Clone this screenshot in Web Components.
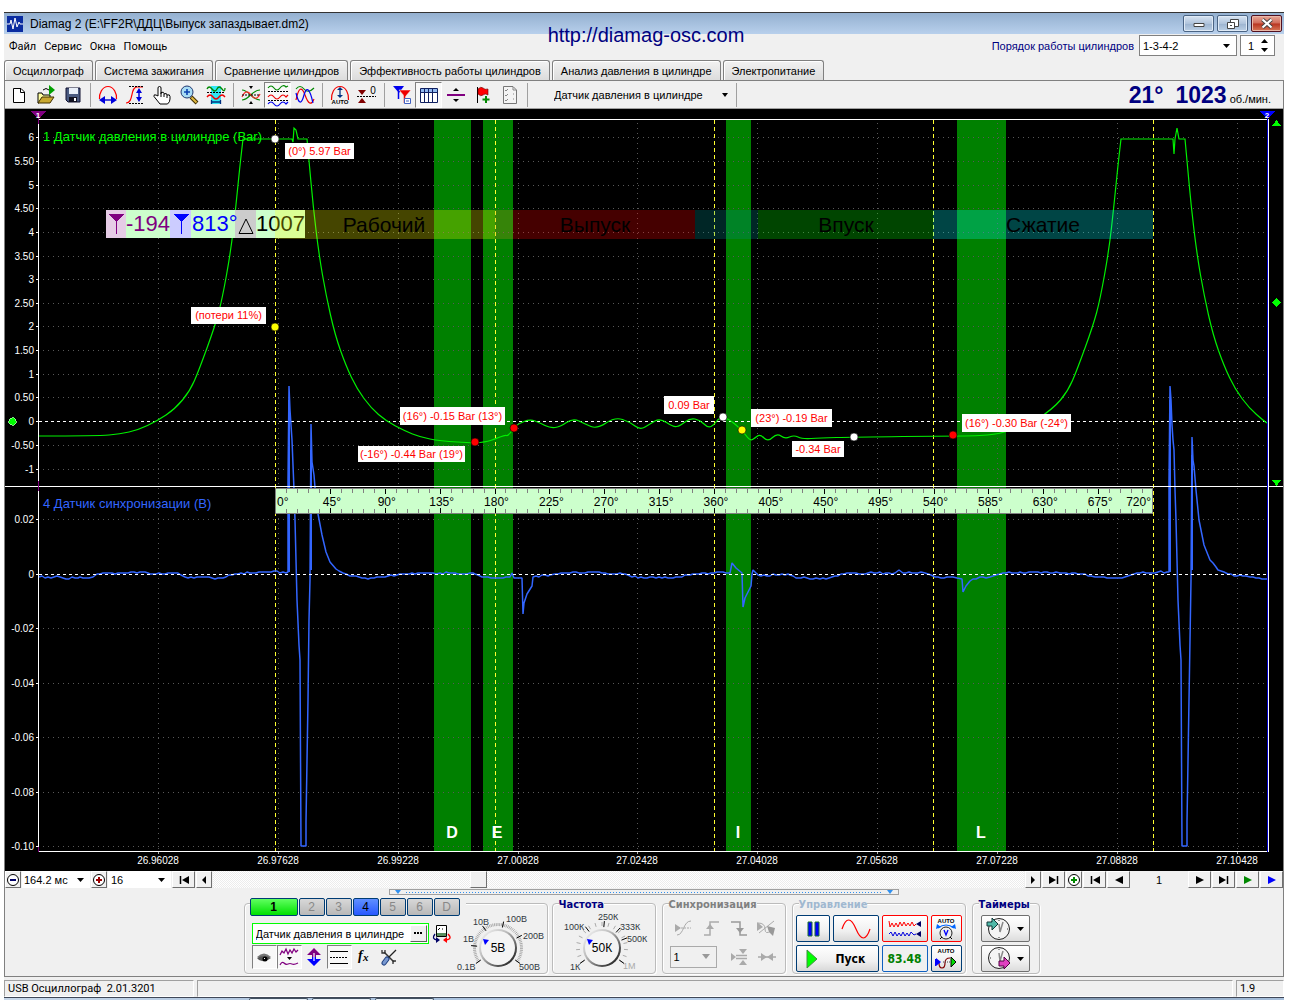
<!DOCTYPE html>
<html lang="ru">
<head>
<meta charset="utf-8">
<title>Diamag 2</title>
<style>
html{background:#fff}
body{margin:0;padding:12px 12px 0 4px;font-family:"Liberation Sans",sans-serif;font-size:11px;line-height:14px;color:#000}
</style>
</head>
<body>
<osc-window></osc-window>
<script>
const BASE=`<style>
*{box-sizing:border-box}
button,input,select{font:inherit;color:inherit;margin:0;padding:0;border:0;border-radius:0;background:none;appearance:none;-webkit-appearance:none;outline:0}
button{display:flex;align-items:center;justify-content:center}
svg{display:block;flex:none}
a{color:inherit;text-decoration:none}
</style>`;
const define=(name,html,after)=>customElements.define(name,class extends HTMLElement{
  constructor(){super();this.attachShadow({mode:'open'})}
  connectedCallback(){
    this.shadowRoot.innerHTML=BASE+(typeof html==='function'?html(this):html);
    if(after)after(this);
  }
});
const S=(w,h,body)=>`<svg width="${w}" height="${h}" viewBox="0 0 ${w} ${h}" fill="none" aria-hidden="true">${body}</svg>`;
const p=(d,c,extra='')=>`<path d="${d}" stroke="${c}" ${extra}/>`;
const f=(d,c,extra='')=>`<path d="${d}" fill="${c}" ${extra}/>`;
const t=(x,y,s,c,size,extra='')=>`<text x="${x}" y="${y}" fill="${c}" font-size="${size}" ${extra}>${s}</text>`;

const ICONS={
 'new':S(20,20,f('M4.500 3.500H12L15.500 7V17.500H4.500Z','#fff','stroke="#000"')+p('M11.500 3.500V7.500H15.500','#000')),
 open:S(20,20,f('M2 8H6L7 10H14V13H6L3 18H2Z','#ffffa0','stroke="#000"')+f('M2 18L6 12H18L14 18Z','#c8a830','stroke="#403000"')+f('M13 0L19 5L13 10Z','#00a000')+p('M7 5Q10 2 13 5','#000')),
 save:S(20,20,f('M3 3H17V17H5L3 15Z','#4a5a80','stroke="#101030"')+f('M6 3H15V9H6Z','#e8eef8')+f('M6 12H14V17H6Z','#101020')+f('M11 13H13V16H11Z','#fff')),
 period:S(20,20,p('M1.500 14C1 9 4 1.500 10 1.500S19 9 18.500 14','#f00','stroke-width="1.200"')+p('M4 15H16','#00c','stroke-width="1.400"')+f('M1 15L7 11V19Z','#00d')+f('M19 15L13 11V19Z','#00d')),
 amp:S(20,20,p('M1 18C9 18 5 2 12 2H18','#f00','stroke-width="1.2"')+p('M4 1.5H18M4 18.5H18','#000','stroke-dasharray="2 1"')+p('M14 5V15','#00d','stroke-width="1.5"')+f('M14 3L17 8H11Z','#00d')+f('M14 17L17 12H11Z','#00d')),
 hand:S(20,20,f('M6 11V3Q6 1.500 7.500 1.500Q9 1.500 9 3V9V7.500Q12 6.500 12 8.500V9Q15 7.500 15 10Q18 9 18 11.500V14Q18 17 15.500 19H8L2 11.500Q1.500 9 4 10Z','#fff','stroke="#000"')+p('M9 9V12M12 9V12M15 10V13','#000')),
 zoom:S(20,20,`<circle cx="8" cy="7" r="6" fill="#a8dcf4" stroke="#203870"/>`+p('M8 4V10M5 7H11','#0a40b0','stroke-width="1.6"')+p('M12 12L18 18','#403000','stroke-width="4"')+p('M12.500 12.500L17.500 17.500','#e0b840','stroke-width="2"')),
 range:S(20,20,f('M5 1H15V19H5Z','#30e8f4')+p('M1 4Q3 0 6 4T11 4T16 4T19 3','#080','stroke-width="1.3"')+p('M1 7.500H19','#000','stroke-dasharray="2 1"')+p('M1 12Q4 8 7 12T13 12T19 12','#e00','stroke-width="1.3"')+p('M5 17H15M5.500 15V19M14.500 15V19','#003080','stroke-width="1.3"')),
 cross:S(20,20,p('M1 15C8 15 11 5 19 5','#080','stroke-width="1.2"')+p('M1 5C8 5 11 15 19 15','#080','stroke-width="1.2"')+p('M1 12Q5 3 10 10T19 9','#f22','stroke-width="1.2"')+p('M1 10H19','#000','stroke-dasharray="2 1"')+f('M8 1H12L10 4Z','#000')+f('M8 19H12L10 16Z','#000')),
 waves:S(24,24,p('M2 5Q5 1 8 5T14 5T20 4L22 3','#080','stroke-width="1.2"')+p('M2 14Q5 10 8 14T14 14T20 14L22 12','#e00','stroke-width="1.2"')+p('M2 21Q5 17 8 21T14 21T20 21L22 19','#00e','stroke-width="1.2"')+p('M2 8.500H22M2 17.500H22','#000','stroke-dasharray="2 1"')),
 multi:S(20,20,p('M1 4Q5 -1 9 4T19 3','#080','stroke-width="1.2"')+p('M1 15Q5 -4 10 10T19 14','#e00','stroke-width="1.2"')+p('M1 8Q5 25 9 10Q13 -4 18 18','#00e','stroke-width="1.2"')),
 auto:S(20,20,p('M1.500 15C1 9 4 1.500 10 1.500S19 9 18.500 15','#e00','stroke-width="1.200"')+p('M10 4V11','#003080','stroke-width="1.300"')+f('M10 2L13 5H7Z','#003080')+f('M10 13L13 10H7Z','#003080')+`<text x="10" y="19" font-size="6" font-weight="700" text-anchor="middle" fill="#000">AUTO</text>`),
 zero:S(20,20,f('M1 5H9L5 10Z','#800000')+f('M1 18H9L5 13Z','#800000')+p('M0 11.500H19','#000','stroke-dasharray="2 1"')+`<text x="16" y="9" font-size="10" text-anchor="middle" fill="#000">0</text>`),
 trig:S(20,20,f('M1 1H12L7 8Z','#00e')+p('M6.500 5V14','#00e','stroke-width="1.500"')+f('M7 5H19L13 12Z','#e00','stroke="#fff" stroke-width=".5"')+p('M12.500 10V18','#e00','stroke-width="1.500"')+f('M12.500 13.500H18.500V18.500H12.500Z','#fff','stroke="#4060c0"')+p('M14 16H17','#4060c0')),
 table:S(20,20,f('M1.500 3.500H18.500V17.500H1.500Z','#fff','stroke="#102060"')+f('M2 4H18V7H2Z','#90b8f0')+p('M1.500 7.500H18.500M5.500 4V17M9.500 4V17M13.500 4V17','#102060')),
 split:S(20,20,p('M1 10H19','#800080','stroke-width="2"')+f('M7 6H13L10 3Z','#000')+f('M7 14H13L10 17Z','#000')),
 flag:S(20,20,p('M4.500 2V18','#000')+f('M5 4Q8 1 10 3T15 4V10Q12 8 10 10T5 9Z','#f00','stroke="#600" stroke-width=".6"')+p('M13 11V18M9.500 14.500H16.500','#080','stroke-width="2"')),
 list:S(20,20,f('M3.500 1.500H13L16.500 5V18.500H3.500Z','#f4f4f4','stroke="#777"')+p('M13 2V5H16M5 5L6 6L8 4M5 10L6 11L8 9M5 15L6 16L8 14M13 9H14M13 14H14','#888')),
 logo:S(16,16,f('M0 0H16V16H0Z','#0a2ca0')+p('M0 8H3L4 4L6 13L8 2L10 11L12 6L13 8H16','#fff')),
 eye:S(22,20,f('M4 10Q11 3 18 10Q11 13 4 10Z','#777')+f('M4 11Q11 7 18 11Q12 16 6 13Z','#555')+`<circle cx="12" cy="12" r="2.500" fill="#000"/>`+f('M11 11H12V12H11Z','#fff')),
 noise:S(20,20,p('M1 8L3 4L5 6L7 2L9 7L11 3L13 6L15 2L17 5L19 3','#800080','stroke-width="1.300"')+p('M1 18Q3 14 5 16T9 17T13 17T19 16','#800080','stroke-width="1.200"')+f('M8 10H13L10.500 13Z','#000')),
 move:S(20,20,f('M10 1L17 8H12V10H8V8H3Z','#800080')+f('M10 19L17 12H12V10H8V12H3Z','#00f')+p('M10 6V14','#fff','stroke-width="1.200"')),
 lines:S(20,20,p('M1 4.500H19M1 16.500H19','#000')+p('M1 10.500H19','#000','stroke-dasharray="2 1"')),
 fx:S(20,20,`<text x="4" y="13" font-family="Liberation Serif,serif" font-size="14" font-style="italic" font-weight="700" fill="#000">f</text><text x="9" y="14" font-family="Liberation Serif,serif" font-size="11" font-style="italic" font-weight="700" fill="#000">x</text>`),
 tools:S(20,20,p('M5 5L15 15','#333','stroke-width="1.500"')+p('M3 3V6H6V3M14 17V14H17','#333','stroke-width="1.300"')+p('M17 3L9 11','#222','stroke-width="1.300"')+p('M8 12L5 16','#204080','stroke-width="5" stroke-linecap="round"')+p('M8 12L5 16','#7898d0','stroke-width="3" stroke-linecap="round"')),
 device:S(20,20,f('M4.500 1.500H14.500V12.500H4.500Z','#fff','stroke="#000"')+f('M5 9H14V12H5Z','#5a9060')+p('M6 6L8 4M10 5H11','#000')+p('M3 10Q-1 15 5 16','#006','stroke-width="1.300"')+p('M16 10Q21 15 14 16','#f00','stroke-width="1.300"')+f('M4 13V19L8 16Z','#006')+f('M15 13V19L11 16Z','#f00')),
 s1:S(18,18,p('M1 9H17','#aaa','stroke-dasharray="2 1"')+p('M3 16C10 16 9 2 17 2','#aaa')+f('M1 5L7 9L1 13Z','#aaa')),
 s2:S(18,18,p('M2 16H8V3H17','#aaa','stroke-width="1.500"')+f('M4 10H12L8 5Z','#aaa')),
 s3:S(18,18,p('M1 3H10V16H17','#999','stroke-width="1.500"')+f('M6 9H14L10 14Z','#999')),
 s4:S(20,18,p('M1 4Q8 4 8 10T14 12M2 14L17 2','#aaa')+f('M0 3L6 8L0 12Z','#aaa')+f('M10 7L18 9L16 17L12 13Z','#999')),
 s5:S(18,18,p('M6 7.500H17M6 10.500H17','#aaa','stroke-width="1.500"')+f('M1 5L6 9L1 13Z','#aaa')+f('M9 1H17L13 6Z','#aaa')+f('M9 17H17L13 12Z','#aaa')),
 s6:S(18,18,p('M0 9H18','#aaa','stroke-width="1.500"')+f('M3 5L9 9L3 13ZM15 5L9 9L15 13Z','#aaa')),
 pause:S(16,16,f('M3 1H7V15H3Z','#00f','stroke="#1a7030"')+f('M10 1H14V15H10Z','#00f','stroke="#1a7030"')),
 sine:S(32,22,p('M2 11C6 -1 11 -1 16 11S26 23 30 11','#f00','stroke-width="1.200"')),
 two:S(34,20,p('M1 2L2 8L4 4L6 8L8 4L10 8L12 3L14 7L16 3L18 7L20 4L22 7L24 3L26 7L28 5','#f00')+p('M1 15L3 13L5 17L7 13L9 17L11 14L13 17L15 13L17 17L19 14L21 17L23 13L26 16L28 15','#00d')+f('M33 2V8L28 5Z','#006')+f('M33 12V18L28 15Z','#006')),
 autov:S(26,26,`<text x="13" y="7" font-size="6" font-weight="700" text-anchor="middle" fill="#000">AUTO</text>`+p('M5 12Q13 6 21 12','#06f','stroke-width="1.200"')+f('M3 13L4 8L8 11ZM23 13L22 8L18 11Z','#06f')+`<circle cx="13" cy="17" r="6" fill="#eee" stroke="#222"/>`+p('M11 14L13 19L15 14','#00f','stroke-width="1.300"')+p('M7 23L9 21M19 23L17 21','#000')),
 autop:S(26,26,`<text x="13" y="7" font-size="6" font-weight="700" text-anchor="middle" fill="#000">AUTO</text>`+p('M6 17Q6 22 9 22T12 17T17 12','#800000','stroke-width="1.200"')+p('M2.500 13V20','#00f')+f('M3 12L8 16L3 20Z','#00f')+p('M10 16H18','#444','stroke-dasharray="1 1"')+f('M18 11L23 16L18 21Z','#0d0','stroke="#000"')),
 clock1:S(26,26,`<circle cx="13" cy="13" r="10.500" fill="#f4f4f4" stroke="#222"/>`+p('M13 8L14 16L17 6','#888','stroke-width="1.500"')+p('M13 4V5M13 21V22M21 13H22','#333')+f('M1 6H6V2L12 8L6 14V10H1Z','#50b8a8','stroke="#103838"')),
 clock2:S(26,26,`<circle cx="13" cy="12" r="10.500" fill="#f4f4f4" stroke="#222"/>`+p('M13 7L14 15L17 5','#888','stroke-width="1.500"')+p('M13 3V4M4 12H5','#333')+f('M13 15H18V11L24 17L18 23V20H13Z','#e040c0','stroke="#500040"')),
 down:S(7,4,f('M0 0H7L3.500 4Z','#000')),
 downs:S(6,4,f('M0 0H6L3 4Z','#000')),
 downg:S(8,5,f('M0 0H8L4 5Z','#999')),
 start:S(12,20,f('M1 1L11 10L1 19Z','#0f0','stroke="#409040"')),
 first:S(12,10,p('M2.500 1V9','#000','stroke-width="1.500"')+f('M11 1V9L4 5Z','#000')),
 prev:S(8,10,f('M6 1V9L2 5Z','#000')),
 prevl:S(10,10,f('M9 1V9L1 5Z','#000')),
 next:S(8,10,f('M2 1V9L6 5Z','#000')),
 nextl:S(10,10,f('M1 1V9L9 5Z','#000')),
 last:S(12,10,p('M9.500 1V9','#000','stroke-width="1.500"')+f('M1 1V9L8 5Z','#000')),
 green:S(10,10,f('M1 1V9L9 5Z','#080')),
 blue:S(10,10,f('M1 1V9L9 5Z','#00f')),
 minus:S(14,14,`<circle cx="7" cy="7" r="5.500" fill="#fff" stroke="#000"/>`+p('M4 7H10','#006','stroke-width="2"')),
 plusr:S(14,14,`<circle cx="7" cy="7" r="5.500" fill="#fff" stroke="#000"/>`+p('M4 7H10M7 4V10','#900','stroke-width="2"')),
 plusg:S(14,14,`<circle cx="7" cy="7" r="5.500" fill="#fff" stroke="#000"/>`+p('M4 7H10M7 4V10','#080','stroke-width="2"')),
};

/* inline icon */
define('osc-icon',el=>`<style>:host{display:block;flex:none}</style>${ICONS[el.getAttribute('name')]}`);

/* flat icon button, optionally pressed */
define('osc-tool',el=>`<style>
:host{display:flex;flex:none;width:27px;height:26px}
:host([small]){width:25px;height:24px}
button{width:100%;height:100%}
:host([pressed]) button{border:1px solid #808080;border-right-color:#fff;border-bottom-color:#fff;background:#f8f8f8}
</style><button aria-label="${el.getAttribute('name')}" ${el.hasAttribute('pressed')?'aria-pressed="true"':''}>${ICONS[el.getAttribute('name')]}</button>`);

/* select with custom arrow */
define('osc-select',el=>`<style>
:host{display:grid;align-items:center;background:#fff}
:host([flat]){background:none}
:host([boxed]){border:1px solid #808080}
:host([disabled]){background:none;border-color:#aaa}
select,i{grid-area:1/1}
select{width:100%;height:100%;padding-left:var(--pad,3px)}
select:disabled{opacity:1}
i{justify-self:end;margin-right:var(--arrow,6px);pointer-events:none}
</style><select aria-label="${el.getAttribute('label')}" ${el.hasAttribute('disabled')?'disabled':''}><option>${el.getAttribute('value')}</option></select><i>${ICONS[el.hasAttribute('disabled')?'downg':el.hasAttribute('flat')?'downs':'down']}</i>`);

define('osc-titlebar',`<style>
:host{display:flex;align-items:center;height:22px;border-top:1px solid #333;background:linear-gradient(#94b0d0,#b8d0ec);padding:0 2px 0 3px;font-family:"Liberation Sans",sans-serif;font-size:12px}
span{flex:1;margin-left:7px}
div{display:flex;gap:3px}
button{width:31px;height:17px;border:1px solid #4a6484;border-radius:2px;background:linear-gradient(#d8e4f2,#b0c4dc 50%,#9cb4d0 52%,#bcd0e6);box-shadow:inset 0 0 0 1px #dfeaf6}
button:last-child{background:linear-gradient(#e8a898,#d06a58 48%,#b83420 52%,#d87858);border-color:#501020;box-shadow:inset 0 0 0 1px #eab8a8}
</style>${ICONS.logo}<span>Diamag 2 (E:\\FF2R\\ДДЦ\\Выпуск запаздывает.dm2)</span>
<div><button aria-label="Свернуть">${S(12,9,f('M1 4.500H11V7.500H1Z','#fff','stroke="#444"'))}</button>
<button aria-label="Восстановить">${S(14,12,f('M4.500 1.500H12.500V8.500H4.500Z','#fff','stroke="#444"')+f('M1.500 4.500H8.500V10.500H1.500Z','#fff','stroke="#444"')+p('M4 7.500H6','#444'))}</button>
<button aria-label="Закрыть">${S(14,11,p('M2.500 1.500L11.500 9.500M11.500 1.500L2.500 9.500','#444','stroke-width="4"')+p('M2.500 1.500L11.500 9.500M11.500 1.500L2.500 9.500','#fff','stroke-width="2.200"'))}</button></div>`);

define('osc-menubar',`<style>
:host{display:flex;height:25px;padding:1px 9px 0 5px;position:relative}
nav{display:flex;gap:8px;flex:1;font-family:Roboto,sans-serif;font-size:11px}
.url{position:absolute;left:50%;top:-11px;transform:translateX(-50%);font-size:20px;line-height:24px;color:#000080;margin-left:2px}
label{display:flex;align-items:center;gap:5px;color:#000080;height:21px}
osc-select{width:98px;height:21px;color:#000}
.spin{display:flex;width:35px;height:21px;margin-left:3px;border:1px solid #808080;background:#fff}
.spin input{width:20px;text-align:center}
.spin div{display:flex;flex-direction:column;justify-content:center;gap:5px}
</style><nav><button>Файл</button><button>Сервис</button><button>Окна</button><button>Помощь</button></nav>
<a class="url" href="http://diamag-osc.com">http://diamag-osc.com</a>
<label>Порядок работы цилиндров <osc-select boxed label="Порядок работы цилиндров" value="1-3-4-2"></osc-select></label>
<div class="spin"><input type="text" aria-label="Цилиндр" value="1"><div><button aria-label="Больше">${S(7,4,f('M0 4H7L3.500 0Z','#000'))}</button><button aria-label="Меньше">${ICONS.down}</button></div></div>`);

define('osc-tabs',`<style>
:host{display:flex;align-items:flex-end;gap:2px;height:21px}
button{height:20px;padding:0 8px;border:1px solid #808080;border-bottom:0;border-radius:3px 3px 0 0;background:linear-gradient(#f2f2f2,#dcdcdc);box-shadow:inset 1px 1px #fff}
button:first-child{height:22px;margin-bottom:-1px;margin-right:-1px;padding:0 8px 2px 12px;background:#f0f0f0}
</style><button>Осциллограф</button><button>Система зажигания</button><button>Сравнение цилиндров</button><button>Эффективность работы цилиндров</button><button>Анализ давления в цилиндре</button><button>Электропитание</button>`);

define('osc-toolbar',`<style>
:host{display:flex;align-items:center;height:29px;border-top:1px solid #808080;border-bottom:1px solid #a0a0a0}
i{width:8px;height:24px;background:linear-gradient(#a0a0a0,#a0a0a0) 4px 0/1px 100% no-repeat;flex:none}
osc-select{width:201px;height:24px;--pad:23px;--arrow:4px}
.read{margin-left:auto;display:flex;align-items:baseline;color:#000080;font:bold 23px/26px "Liberation Sans",sans-serif;padding-right:12px}
.read b+b{margin-left:12px}
.read span{font:11px/14px "Liberation Sans",sans-serif;color:#000;margin-left:3px}
</style>
<osc-tool name="new"></osc-tool><osc-tool name="open"></osc-tool><osc-tool name="save"></osc-tool><i></i>
<osc-tool name="period"></osc-tool><osc-tool name="amp"></osc-tool><osc-tool name="hand"></osc-tool><osc-tool name="zoom"></osc-tool><osc-tool name="range"></osc-tool><i></i>
<osc-tool name="cross"></osc-tool><osc-tool name="waves" pressed></osc-tool><osc-tool name="multi"></osc-tool><i></i>
<osc-tool name="auto"></osc-tool><osc-tool name="zero"></osc-tool><i></i>
<osc-tool name="trig"></osc-tool><osc-tool name="table" pressed></osc-tool><osc-tool name="split"></osc-tool><osc-tool name="flag"></osc-tool><osc-tool name="list"></osc-tool><i></i>
<osc-select flat label="Датчик" value="Датчик давления в цилиндре"></osc-select><i></i>
<div class="read"><b>21°</b><b>1023</b><span>об./мин.</span></div>`);

/* oscilloscope screen */
const smooth=pts=>{let d=`M${pts[0]}`;for(let i=1;i<pts.length-1;i++){const a=pts[i],b=pts[i+1];d+=`Q${a} ${(a[0]+b[0])/2},${(a[1]+b[1])/2}`}return d+`L${pts[pts.length-1]}`};
const chop=s=>s.trim().split(/\s+/).map(q=>q.split(',').map(Number));
const noisy=pts=>{ /* adds sampling ripple on near-level stretches */
  let d='M'+pts[0],seed=7;
  for(let i=1;i<pts.length;i++){
    const [x0,y0]=pts[i-1],[x1,y1]=pts[i];
    if(x1-x0>6)for(let x=x0+3;x<x1-1;x+=3){seed=(seed*73+41)%257;const y=y0+(y1-y0)*(x-x0)/(x1-x0);d+=`L${x},${Math.round(y+(seed/257-.5)*1.6)}`}
    d+=`L${x1},${y1}`;
  }
  return d;
};
define('osc-scope',()=>{
  const grid=[158,278,398,518,637,757,877,997,1117,1237], time=['26.96028','26.97628','26.99228','27.00828','27.02428','27.04028','27.05628','27.07228','27.08828','27.10428'];
  const top=[['6',137],['5.50',161],['5',185],['4.50',208],['4',232],['3.50',256],['3',279],['2.50',303],['2',326],['1.50',350],['1',374],['0.50',397],['0',421],['-0.50',445],['-1',469]];
  const bot=[['0.02',519],['0',574],['-0.02',628],['-0.04',683],['-0.06',737],['-0.08',792],['-0.10',846]];
  let g='';
  const bands=[[434,37],[483,30],[726,25],[957,49]];
  g+=bands.map(b=>`<rect x="${b[0]}" y="120" width="${b[1]}" height="731" fill="#008000"/>`).join('');
  g+=`<g stroke="#585858" stroke-dasharray="1 4">`+grid.map(x=>`<path d="M${x}.5 123V851"/>`).join('')+[...top,...bot].filter(a=>a[0]!=='0').map(a=>`<path d="M43 ${a[1]}.5H1267"/>`).join('')+`</g>`;
  g+=`<g stroke="#fff" stroke-dasharray="3 3"><path d="M39 421.5H1267"/></g>`;
  g+=`<g class="ax" text-anchor="end">`+[...top,...bot].map(a=>`<text x="34" y="${a[1]+4}">${a[0]}</text><path d="M36 ${a[1]}.5H39" stroke="#fff"/>`).join('')+`</g>`;
  g+=`<g class="ax" text-anchor="middle">`+grid.map((x,i)=>`<text x="${x}" y="864">${time[i]}</text><path d="M${x}.5 852V854" stroke="#aaa"/>`).join('')+`</g>`;
  g+=`<g fill="none" stroke="#ffff30" stroke-dasharray="4 3">`+[275,495,714,933,1153].map(x=>`<path d="M${x}.5 120V851"/>`).join('')+`</g>`;
  /* pressure trace */
  const rise=chop('98,436 120,434 138,430 157,421 175,409 190,391 199,370 215,326 222,300 231,250 236,205 240,165 243,139');
  const fall=chop('307,139 309,160 313,205 319,255 326,295 335,335 346,366 357,389 371,408 386,421 405,431 420,437 440,441 475,443');
  const sh=a=>a.map(q=>[q[0]+878,q[1]]);
  const green=smooth([[39,436],...rise])+'H292L293 142L294 128L296 130L298 139H307'+smooth(fall).replace('M','L')+
   smooth(chop('475,443 486,442 495,439 505,435 508,436 514,428 518,424 530,419 540,423 550,428 560,427 573,418 585,424 597,429 615,417 630,422 640,430 650,424 660,418 673,427 680,426 690,418 700,420 708,428 714,425 718,419 723,417 730,420 742,430 750,441 755,438 760,434 768,442 777,433 785,439 794,435 802,439 820,438 853,437 953,436 975,436 1000,434 1022,426 1035,421')).replace('M','L')+
   smooth(sh(rise.slice(3))).replace('M','L')+'H1173L1174 154L1175 139L1177 128L1179 139H1185'+smooth([...sh(fall.slice(0,10)),[1267,423]]).replace('M','L');
  g+=`<path d="${green}" fill="none" stroke="#00f000" shape-rendering="auto" stroke-width="1.2"/>`;
  /* sync trace */
  const blue=noisy(chop('39,577 60,577 66,579 80,577 93,577 97,574 125,573 142,572 150,574 175,573 185,577 220,578 235,574 265,572 288,572 288,480 289,386 290,410 291,425 292,440 294,490 295,520 297,600 299,645 300,660 301,846 306,846 306,822 308,700 309,620 310,580 311,424 312,462 314,475 316,500 318,514 322,535 326,552 330,562 336,569 343,573 350,576 365,578 385,577 400,574 440,573 475,574 482,577 500,578 510,577 512,573 514,578 522,578 523,614 524,603 527,594 532,586 533,577 550,575 555,574 590,572 625,574 632,577 670,578 690,575 705,573 730,573 732,563 736,568 742,573 743,607 745,598 751,586 752,574 753,570 758,575 790,575 798,578 820,579 835,576 850,573 895,573 899,570 903,573 925,573 935,577 957,578 962,579 963,592 966,586 970,581 980,577 990,577 1000,574 1020,572 1060,573 1085,574 1095,577 1110,578 1125,577 1140,573 1169,572 1169,480 1170,386 1171,400 1172,425 1173,440 1174,450 1175,490 1176,520 1178,600 1180,645 1181,660 1182,846 1187,846 1187,822 1189,700 1191,580 1192,437 1193,460 1194,466 1196,490 1199,520 1204,545 1210,560 1218,570 1228,574 1250,577 1267,579'));
  g+=`<path d="${blue}" fill="none" stroke="#3366ff" stroke-width="1.5" shape-rendering="auto" stroke-linejoin="bevel"/>`;
  g+=`<path d="M289 400V572M311 450V570M1170 400V572M1192 455V570" stroke="#3366ff" stroke-width="2"/>`;
  g+=`<path d="M39 574.5H1267" stroke="#fff" stroke-dasharray="3 3"/>`;
  g+=`<path d="M38 119.5H1268M38.500 119V852M38 851.500H1268M5 486.500H1283M1268.500 119V852" stroke="#fff"/><path d="M1267.500 119V852" stroke="#00c"/><path d="M38.500 113V124M38.500 481V491M38.500 847V852" stroke="#800080"/>`;
  /* cursors */
  g+=`<path d="M31 111H46L38.500 119Z" fill="#800080"/><path d="M1260 111H1275L1267.500 119Z" fill="#00f"/>`+t(38,118,'1','#fff',8,'font-weight="700" text-anchor="middle"')+t(1267,118,'2','#fff',8,'font-weight="700" text-anchor="middle"');
  g+=`<path d="M1272 126H1281L1276.500 120ZM1272 480H1281L1276.500 486ZM1272 302.500L1276.500 298L1281 302.500L1276.500 307Z" fill="#0f0"/><circle cx="12.500" cy="421.500" r="3.700" fill="#0f0" stroke="#a8ffa8" stroke-width=".8"/>`;
  g+=t(43,141,'1 Датчик давления в цилиндре (Bar)','#00ff00',13)+t(43,508,'4 Датчик синхронизации (В)','#3366ff',13);
  /* cursor readout */
  g+=[[106,20,'#e6cce6'],[126,44,'#ccffcc'],[170,21,'#ccccff'],[191,44,'#ccffcc'],[235,21,'#cccccc'],[256,49,'#ccffcc']].map(b=>`<rect x="${b[0]}" y="210" width="${b[1]}" height="28" fill="${b[2]}"/>`).join('');
  g+=`<path d="M108.500 214H124.500L116.500 222Z" fill="#800080"/><path d="M116.500 220V234" stroke="#800080"/><path d="M173.500 214H189.500L181.500 222Z" fill="#00f"/><path d="M181.500 220V234" stroke="#00f"/><path d="M239 233.500L246 219L253 233.500Z" fill="none" stroke="#000" shape-rendering="auto"/>`;
  g+=t(170,231,'-194','#800080',22,'text-anchor="end"')+t(192,231,'813°','#00f',22)+t(305,231,'1007','#000',22,'text-anchor="end"');
  /* stroke phases */
  g+=[[275,220,'#ffff00'],[495,18,'#c89020'],[513,182,'#ff0000'],[695,63,'#008c8c'],[758,175,'#00ff00'],[933,220,'#00ffff']].map(b=>`<rect x="${b[0]}" y="210" width="${b[1]}" height="29" fill="${b[2]}" fill-opacity=".27"/>`).join('');
  g+=[[384,'Рабочий'],[595,'Выпуск'],[846,'Впуск'],[1043,'Сжатие']].map(b=>t(b[0],232,b[1],'#000',21,'text-anchor="middle"')).join('');
  /* crank angle ruler */
  g+=`<rect x="275.500" y="488.500" width="877" height="25" fill="#ccffcc" stroke="#808080"/>`;
  for(let i=1;i<80;i++){const x=Math.round(275+i*10.975)+.5,m=i%5===0;g+=`<path d="M${x} 489v${m?5:4}M${x} 513v${m?-5:-4}" stroke="${m?'#000':'#808080'}"/>`}
  for(let a=0;a<=720;a+=45){const x=a===0?277:a===720?1151:275+a*1.2195+2;g+=t(x,506,a+'°','#000',12,`text-anchor="${a===0?'start':a===720?'end':'middle'}"`)}
  /* value labels */
  g+=[[285,143,69,16,'(0°) 5.97 Bar'],[191,307,75,17,'(потери 11%)'],[400,407,105,18,'(16°) -0.15 Bar (13°)'],[358,446,107,16,'(-16°) -0.44 Bar (19°)'],[664,396,50,18,'0.09 Bar'],[751,409,81,18,'(23°) -0.19 Bar'],[792,441,52,16,'-0.34 Bar'],[962,414,109,18,'(16°) -0.30 Bar (-24°)']]
   .map(b=>`<rect x="${b[0]}" y="${b[1]}" width="${b[2]}" height="${b[3]}" fill="#fff"/>`+t(b[0]+b[2]/2,b[1]+(b[3]>17?13:12),b[4],'#f00',11,'text-anchor="middle"')).join('');
  g+=[[275,139,'#fff'],[275,327,'#ff0'],[475,442,'#f00'],[514,428,'#f00'],[723,417,'#fff'],[742,430,'#ff0'],[854,437,'#fff'],[953,435,'#f00']].map(c=>`<circle cx="${c[0]}" cy="${c[1]}" r="4" fill="${c[2]}" stroke="#000" stroke-width=".6" shape-rendering="auto"/>`).join('');
  g+=[[452,'D'],[497,'E'],[738,'I'],[981,'L']].map(b=>t(b[0],838,b[1],'#fff',16,'font-weight="700" text-anchor="middle"')).join('');
  return `<style>:host{display:block;background:#000}svg{width:100%;height:auto}.ax{font-family:"Liberation Sans",sans-serif;font-size:10px;fill:#fff}</style><svg viewBox="5 109 1278 762" shape-rendering="crispEdges" role="img" aria-label="Осциллограмма">${g}</svg>`;
});

define('osc-navbar',`<style>
:host{display:flex;align-items:stretch;height:17px;gap:1px;font-size:11px}
button{background:#f0f0f0;border:1px solid #fff;border-right-color:#707070;border-bottom-color:#707070;flex:none}
.s{width:16px}.m{width:23px}
osc-select.a{width:68px;--pad:2px}osc-select.b{width:63px}
.r{flex:1;min-width:60px;background:repeating-conic-gradient(#fff 0 25%,#ececec 0 50%) 0 0/2px 2px}
.r::-webkit-slider-thumb{appearance:none;-webkit-appearance:none;width:17px;height:17px;background:#f0f0f0;border:1px solid #fff;border-right-color:#707070;border-bottom-color:#707070}
.page{width:56px;text-align:center}
</style>
<button class="s" aria-label="Сжать">${ICONS.minus}</button><osc-select class="a" label="Развёртка" value="164.2 мс"></osc-select><button class="s" aria-label="Растянуть">${ICONS.plusr}</button><osc-select class="b" label="Масштаб" value="16"></osc-select>
<button class="m" aria-label="В начало">${ICONS.first}</button><button class="s" aria-label="Назад">${ICONS.prev}</button>
<input class="r" type="range" aria-label="Прокрутка" min="0" max="1000" value="324">
<button class="s" aria-label="Вперёд">${ICONS.next}</button><button class="m" aria-label="В конец">${ICONS.last}</button><button class="s" aria-label="Добавить">${ICONS.plusg}</button><button class="m" aria-label="Первый кадр">${ICONS.first}</button><button class="m" aria-label="Предыдущий кадр">${ICONS.prevl}</button>
<input class="page" type="text" aria-label="Кадр" value="1">
<button class="m" aria-label="Следующий кадр">${ICONS.nextl}</button><button class="m" aria-label="Последний кадр">${ICONS.last}</button><button class="m" aria-label="Пуск">${ICONS.green}</button><button class="m" aria-label="Продолжить">${ICONS.blue}</button>`);

/* titled frame */
define('osc-group',el=>`<style>
:host{display:block;position:relative;height:76px}
:host::before{content:"";position:absolute;inset:5px 0 0;border:1px solid #bbb;border-radius:4px;box-shadow:inset 1px 1px #fff,1px 1px #fff}
h2{position:relative;display:inline-block;margin:0 0 0 7px;font:bold 11px/13px "DejaVu Sans Condensed","DejaVu Sans",sans-serif;color:#000080;background:#f0f0f0;vertical-align:top}
:host([tone=gray]) h2{color:#808080}
:host([tone=blue]) h2{color:#a0b8d0}
.body{position:relative}
</style>${el.getAttribute('label')?`<h2>${el.getAttribute('label')}</h2>`:''}<div class="body"><slot></slot></div>`);

/* rotary dial: viewBox is 92x62 with the knob in the middle */
define('osc-dial',el=>{
  const v=el.getAttribute('kind')==='volt';
  const pol=(r,a)=>{const q=a*Math.PI/180;return [(46+r*Math.sin(q)).toFixed(1),(36-r*Math.cos(q)).toFixed(1)]};
  let m='';const n=v?60:16;
  for(let i=0;i<=n;i++){const a=-125+250*i/n;m+=`<path d="M${pol(22,a)}L${pol(v?25:26,a)}" stroke="#aaa"/>`}
  const labels=v?[['0.1В',5,58,-125],['1В',11,30,-85],['10В',21,13,-35],['100В',54,10,12],['200В',71,27,62],['500В',67,58,125]]:[['1К',14,58,-125],['100К',8,18,-38],['250К',42,8,5],['333К',64,18,42],['500К',71,30,68],['1М',67,57,125]];
  m+=labels.map(l=>`<path d="M${pol(21,l[3])}L${pol(27,l[3])}" stroke="#000"/>`+t(l[1],l[2],l[0],!v&&l[0]==='1М'?'#aaa':'#303840',9)).join('');
  return `<style>:host{display:block;width:92px}text{font-family:"Liberation Sans",sans-serif}</style>
  <svg width="92" height="62" viewBox="0 0 92 62" overflow="visible"><defs><linearGradient id="g" x1="0" y1="0" x2="1" y2="1"><stop offset="0" stop-color="#fff"/><stop offset=".4" stop-color="#bbb"/><stop offset="1" stop-color="#000"/></linearGradient></defs>${m}
  <circle cx="46" cy="36" r="19" fill="url(#g)"/><circle cx="46" cy="36" r="17" fill="#f4f4f4"/><path d="M31 27L37 28L33 33Z" fill="#00f"/>
  <text x="46" y="40" text-anchor="middle" font-size="12" fill="#000">${el.getAttribute('value')}</text></svg>`;
});

define('osc-channel',`<style>
.ch{display:flex;gap:1px;margin-left:6px;background:#f0f0f0;width:216px}
.ch button{width:26px;height:18px;border:1px solid #003c74;border-radius:2px;background:linear-gradient(#d8d8d8,#b8b8b8);color:#888;font-size:12px}
.ch button:first-child{width:48px;background:linear-gradient(#60ff60,#00e000);color:#000;font-weight:700}
.ch button:nth-child(4){background:linear-gradient(#6090ff,#2858ff);color:#000}
.row{display:flex;align-items:center;margin:7px 0 0 8px;gap:3px}
.box{display:flex;width:177px;height:21px;border:1px solid #0f0;background:#fff;padding:1px}
.box input{flex:1;min-width:0;padding-left:2px}
.box button{width:17px;background:#f0f0f0;border:1px solid #fff;border-right-color:#606060;border-bottom-color:#606060}
.tools{display:flex;margin:1px 0 0 8px}
</style><div class="ch"><button>1</button><button>2</button><button>3</button><button>4</button><button>5</button><button>6</button><button>D</button></div>
<div class="row"><div class="box"><input type="text" aria-label="Датчик" value="Датчик давления в цилиндре"><button aria-label="Выбрать">${S(9,3,f('M0 0H2V2H0ZM3 0H5V2H3ZM6 0H8V2H6Z','#000'))}</button></div><osc-icon name="device"></osc-icon></div>
<div class="tools"><osc-tool small name="eye" pressed></osc-tool><osc-tool small name="noise" pressed></osc-tool><osc-tool small name="move"></osc-tool><osc-tool small name="lines" pressed></osc-tool><osc-tool small name="fx"></osc-tool><osc-tool small name="tools"></osc-tool></div>`);

define('osc-panel',`<style>
:host{display:block;height:88px;border-bottom:1px solid #808080}
.split{display:flex;width:510px;height:6px;margin:1px auto 3px;border:1px solid #a0a0a0;justify-content:space-between;align-items:center;padding:0 5px}
.split i{flex:1;height:1px;margin:0 5px;background:repeating-linear-gradient(90deg,#3090f0 0 1px,transparent 1px 3px)}
.groups{display:flex;justify-content:center;align-items:flex-start;padding-right:5px}
osc-group{margin-right:6px}
.first{display:flex;position:relative;width:304px}
.first osc-channel{width:208px}
.first osc-dial{margin-top:14px}
osc-group.g1{width:304px;margin-right:4px}osc-group.g2{width:104px}.g3{width:124px}.g4{width:174px}.g5{width:68px;margin-right:0}
.g2 osc-dial{margin-left:4px}
.sync{display:grid;grid-template-columns:28px 29px 27px 28px;margin:2px 0 0 7px;align-items:center;justify-items:center;row-gap:2px;grid-auto-rows:27px}
.sync osc-select{width:47px;height:22px;grid-column:1/3;justify-self:start;margin-left:1px}
.sync osc-tool{height:24px}
.run{display:grid;grid-template-columns:34px 46px 46px 31px;gap:3px;margin:3px 0 0 4px;grid-auto-rows:27px}
.run button{border:1px solid #003c74;border-radius:2px;background:linear-gradient(#fff,#f0f0f0 60%,#d8d8d8)}
.run .red{border-color:#f00}
.run .go{grid-column:1/3;justify-content:flex-start;padding-left:9px;gap:18px;font:bold 12px/14px "DejaVu Sans Condensed","DejaVu Sans",sans-serif}
.run output{display:flex;align-items:center;justify-content:center;border:1px solid #1060c0;border-radius:2px;color:#008000;font:bold 12px/14px "DejaVu Sans Condensed","DejaVu Sans",sans-serif}
.time{display:grid;gap:3px;margin:3px 0 0 9px;grid-template-columns:49px;grid-auto-rows:27px}
.time button{gap:5px;border:1px solid #707070;border-radius:2px;background:linear-gradient(#fff,#f0f0f0 60%,#dcdcdc)}
</style>
<button class="split" aria-label="Скрыть панель">${S(6,4,f('M0 0H6L3 4Z','#3090f0'))}<i></i>${S(6,4,f('M0 0H6L3 4Z','#3090f0'))}</button>
<div class="groups">
<osc-group class="g1"><div class="first"><osc-channel></osc-channel><osc-dial kind="volt" value="5В"></osc-dial></div></osc-group>
<osc-group class="g2" label="Частота"><osc-dial kind="freq" value="50К"></osc-dial></osc-group>
<osc-group class="g3" label="Синхронизация" tone="gray"><div class="sync"><osc-tool name="s1"></osc-tool><osc-tool name="s2"></osc-tool><osc-tool name="s3"></osc-tool><osc-tool name="s4"></osc-tool><osc-select boxed disabled label="Канал синхронизации" value="1"></osc-select><osc-tool name="s5"></osc-tool><osc-tool name="s6"></osc-tool></div></osc-group>
<osc-group class="g4" label="Управление" tone="blue"><div class="run"><button aria-label="Пауза">${ICONS.pause}</button><button aria-label="Сигнал">${ICONS.sine}</button><button class="red" aria-label="Запись">${ICONS.two}</button><button class="red" aria-label="Авто диапазон">${ICONS.autov}</button><button class="go">${ICONS.start}Пуск</button><output>83.48</output><button aria-label="Авто запуск">${ICONS.autop}</button></div></osc-group>
<osc-group class="g5" label="Таймеры"><div class="time"><button aria-label="Таймер начала">${ICONS.clock1}${ICONS.down}</button><button aria-label="Таймер конца">${ICONS.clock2}${ICONS.down}</button></div></osc-group>
</div>`);

define('osc-status',`<style>
:host{display:flex;gap:3px;padding-top:3px}
div{height:17px;line-height:15px;padding-left:3px;border:1px solid #a0a0a0;border-right-color:#fff;border-bottom-color:#fff;white-space:pre;font-family:Roboto,sans-serif}
div:nth-of-type(1){width:190px}div:nth-of-type(2){flex:1}div:nth-of-type(3){width:48px}
</style><div>USB Осциллограф  2.01.3201</div><div></div><div>1.9</div>`);

define('osc-taskbar',`<style>
:host{display:flex;height:4px;gap:4px;border-top:1px solid #404858;background:linear-gradient(90deg,#c8d8ea,#a8c0dc 30%,#b8d0ec 55%,#7890a8 80%,#a8c0dc);padding-left:245px}
i{width:59px;background:#e8f0f8;border:1px solid #405060;border-bottom:0;border-radius:2px 2px 0 0}
</style><i></i><i></i><i></i>`);

define('osc-window',`<style>
:host{display:block;background:#f0f0f0;min-width:1060px}
.work{border:solid #808080;border-width:0 1px}
</style><osc-titlebar></osc-titlebar><osc-menubar></osc-menubar><osc-tabs></osc-tabs>
<div class="work"><osc-toolbar></osc-toolbar><osc-scope></osc-scope><osc-navbar></osc-navbar><osc-panel></osc-panel></div>
<osc-status></osc-status><osc-taskbar></osc-taskbar>`);
</script>
</body>
</html>
